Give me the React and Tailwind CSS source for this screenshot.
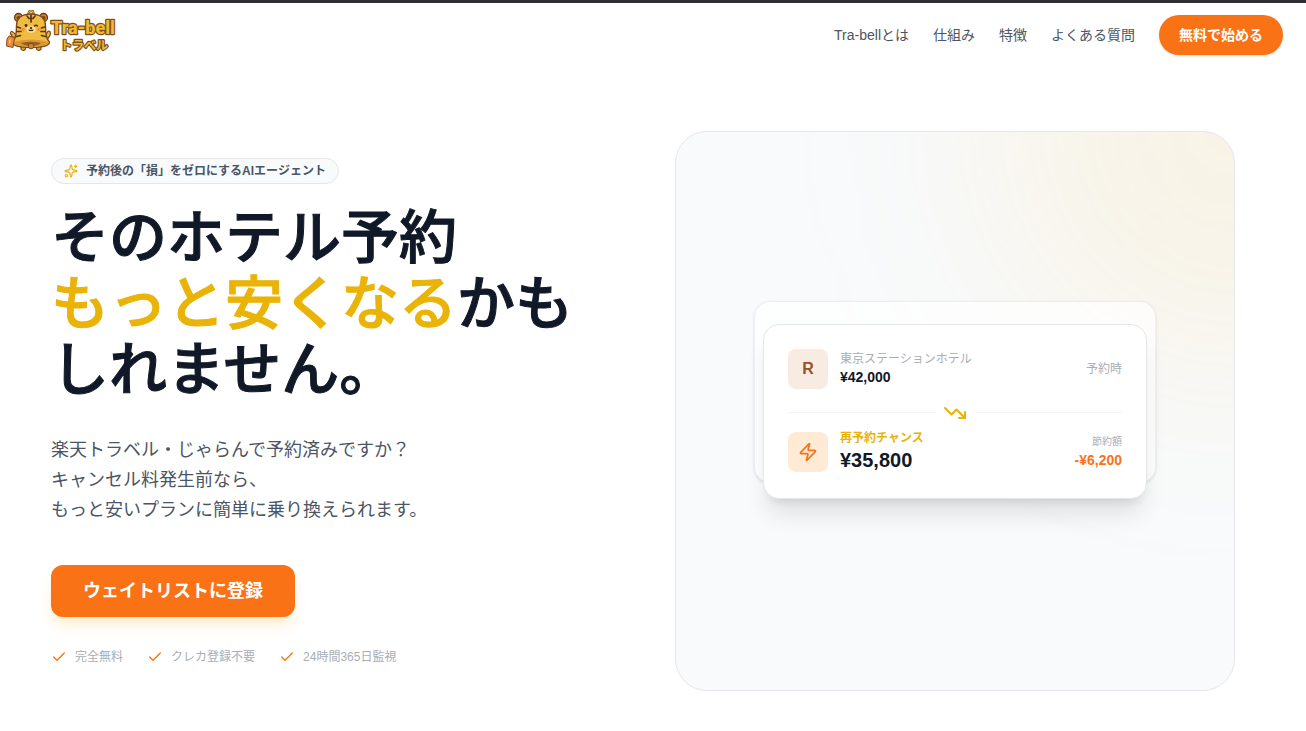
import { Check, Sparkles, TrendingDown, Zap } from "lucide-react";

const navLinks = [
  { label: "Tra-bellとは", href: "#about" },
  { label: "仕組み", href: "#how" },
  { label: "特徴", href: "#features" },
  { label: "よくある質問", href: "#faq" },
];

const points = ["完全無料", "クレカ登録不要", "24時間365日監視"];

const Logo = () => (
  <svg width="112" height="50" viewBox="0 0 112 50" role="img" aria-label="Tra-bell トラベル">
    {/* ring and ears */}
    <circle cx="25" cy="3" r="2.2" fill="none" stroke="#7a4a1e" strokeWidth="2.6" />
    <circle cx="25" cy="3" r="2.2" fill="none" stroke="#e9a92a" strokeWidth="1.2" />
    <circle cx="12.5" cy="7.5" r="4" fill="#c9862c" stroke="#6b3e16" strokeWidth="1.3" />
    <circle cx="37.5" cy="7.5" r="4" fill="#c9862c" stroke="#6b3e16" strokeWidth="1.3" />
    <circle cx="12.5" cy="8" r="2" fill="#7b4419" />
    <circle cx="37.5" cy="8" r="2" fill="#7b4419" />
    {/* feet */}
    <path d="M15 35v4q2 3 4.500 0v-4M30.500 35v4q2 3 4.500 0v-4" fill="#e0a035" stroke="#7a4a1e" strokeWidth="1.200" />
    {/* arms */}
    <path d="M10 25q-5-6-5.500-2 0 3 5.500 6M40 26q1-6 4-4.500 1.500 3-2.500 7.500" fill="#edb63c" stroke="#7a4a1e" strokeWidth="1.200" />
    {/* bell body */}
    <path d="M25 4C15 4 10.500 9 10.500 16c0 8-.500 13-4 16 0 4 8.500 5.500 18.500 5.500s18.500-1.500 18.500-5.500c-3.500-3-4-8-4-16C39.500 9 35 4 25 4Z" fill="#efbb40" stroke="#7a4a1e" strokeWidth="1.400" />
    <path d="M7 32q18-5 36 0 0 4-18 5-18-1-18-5Z" fill="#d79a33" />
    <path d="M15 33q10-2.500 20 0-3 3-10 3t-10-3Z" fill="#9a5f22" />
    <circle cx="25" cy="36" r="2.800" fill="#c98a2c" stroke="#7a4a1e" />
    {/* stripes */}
    <path d="M21 6l2 2.500h4L29 6M25 5v7M11.500 17l3 1M11 21.500l4 0M38.500 17l-3 1M39 21.500h-4M10.500 26.500l4-1M39.500 26.500l-4-1" fill="none" stroke="#5c3513" strokeWidth="1.700" strokeLinecap="round" />
    {/* face */}
    <ellipse cx="25" cy="19.500" rx="4.500" ry="3.300" fill="#fbe0a0" />
    <circle cx="20" cy="15.500" r="1.400" fill="#432509" />
    <path d="M28.500 16q1.500-1.800 3 0M23 20q1 1.500 2 0 1 1.500 2 0" fill="none" stroke="#432509" strokeWidth="1.200" strokeLinecap="round" />
    <ellipse cx="25" cy="18" rx="1.300" ry="1" fill="#432509" />
    <circle cx="17" cy="19.500" r="1.800" fill="#f08e4d" />
    <circle cx="33" cy="19.500" r="1.800" fill="#f08e4d" />
    {/* luggage tag */}
    <path d="M6 24l-1 3" stroke="#7a4a1e" />
    <path d="M3 26l5.500 1.500-1.500 10L.500 36l.500-7Z" fill="#ee8b3d" stroke="#8a4a1c" />
    <path d="M4 29.500l-.500 4" stroke="#fbd39a" strokeWidth="1.200" />
    <g fill="#f2b92f" stroke="#7a4f22" strokeWidth="2.400" strokeLinejoin="round" paintOrder="stroke">
      <text x="45" y="24" fontSize="18" fontWeight="800" fontFamily="Roboto, sans-serif">Tra-bell</text>
      <text x="54" y="40" fontSize="12" fontWeight="700" fontFamily="'Noto Sans CJK JP', sans-serif">トラベル</text>
    </g>
  </svg>
);

const Header = () => (
  <header className="border-t-[3px] border-[#2f2e33]">
    <div className="flex h-16 items-center justify-between pl-1.5 pr-[23px]">
      <a href="#top">
        <Logo />
      </a>
      <nav className="flex items-center gap-6 text-sm text-[#4b5563]">
        {navLinks.map((link) => (
          <a key={link.href} href={link.href}>
            {link.label}
          </a>
        ))}
        <button
          type="button"
          className="rounded-full bg-[#f97316] px-5 py-2.5 font-bold text-white shadow-sm"
        >
          無料で始める
        </button>
      </nav>
    </div>
  </header>
);

const PriceCard = () => (
  <div className="relative w-full max-w-96">
    {/* card peeking out behind */}
    <div className="absolute -inset-x-[9px] -top-[23px] bottom-4 rounded-2xl border border-gray-200/70 bg-white/70 shadow-sm" />

    <div className="relative rounded-2xl border border-gray-200 bg-white p-6 shadow-xl">
      <div className="flex items-center gap-3">
        <div className="flex size-10 items-center justify-center rounded-lg bg-[#f8ece2] font-bold text-[#9a4f2b]">
          R
        </div>
        <div className="flex-1">
          <p className="text-xs text-[#a9adb5]">東京ステーションホテル</p>
          <p className="text-sm font-bold text-[#111827]">¥42,000</p>
        </div>
        <p className="text-xs text-[#a9adb5]">予約時</p>
      </div>

      <div className="mt-3 flex items-center gap-2">
        <div className="h-px flex-1 bg-gray-100" />
        <TrendingDown className="size-6 text-[#eab308]" />
        <div className="h-px flex-1 bg-gray-100" />
      </div>

      <div className="mt-[5px] flex items-center gap-3">
        <div className="flex size-10 items-center justify-center rounded-lg bg-[#ffead5]">
          <Zap className="size-5 text-[#f97316]" />
        </div>
        <div className="flex-1">
          <p className="text-xs font-bold text-[#eab308]">再予約チャンス</p>
          <p className="text-xl font-bold text-[#111827]">¥35,800</p>
        </div>
        <div className="text-right">
          <p className="text-[10px] leading-4 text-[#a9adb5]">節約額</p>
          <p className="text-sm font-bold text-[#f97316]">-¥6,200</p>
        </div>
      </div>
    </div>
  </div>
);

const Hero = () => (
  <section className="grid grid-cols-2 items-center gap-16 pb-10 pl-[51px] pr-[71px] pt-16">
    <div>
      <div className="inline-flex items-center gap-2 rounded-full border border-gray-200 bg-[#f8fafc] px-3 py-1 text-xs font-bold text-[#4b5563]">
        <Sparkles className="size-3.5 text-[#eab308]" />
        予約後の「損」をゼロにするAIエージェント
      </div>

      <h1 className="mt-5 text-[58px] font-medium leading-[66px] text-[#111827] [-webkit-text-stroke:1px]">
        そのホテル予約
        <br />
        <span className="text-[#eab308]">もっと安くなる</span>かも
        <br />
        しれません。
      </h1>

      <p className="mt-8 text-lg leading-[30px] text-[#4b5563]">
        楽天トラベル・じゃらんで予約済みですか？
        <br />
        キャンセル料発生前なら、
        <br />
        もっと安いプランに簡単に乗り換えられます。
      </p>

      <button
        type="button"
        className="mt-10 rounded-xl bg-[#f97316] px-8 py-3 text-lg font-bold text-white shadow-lg shadow-[#f59e0b]/20"
      >
        ウェイトリストに登録
      </button>

      <ul className="mt-8 flex gap-6 text-xs text-[#a9adb5]">
        {points.map((point) => (
          <li key={point} className="flex items-center gap-2">
            <Check className="size-4 text-[#f97316]" />
            {point}
          </li>
        ))}
      </ul>
    </div>

    <div className="relative flex aspect-square items-center justify-center overflow-hidden rounded-[32px] border border-gray-200 bg-[#f8fafc]">
      {/* warm glow in the corner */}
      <div className="absolute -right-[250px] -top-[250px] size-[500px] rounded-full bg-[#fbb724]/10 blur-[100px]" />
      <PriceCard />
    </div>
  </section>
);

export default function App() {
  return (
    <div
      id="top"
      className="min-h-screen bg-white font-['Liberation_Sans','Noto_Sans_CJK_JP',sans-serif]"
    >
      <Header />
      <main>
        <Hero />
      </main>
    </div>
  );
}
